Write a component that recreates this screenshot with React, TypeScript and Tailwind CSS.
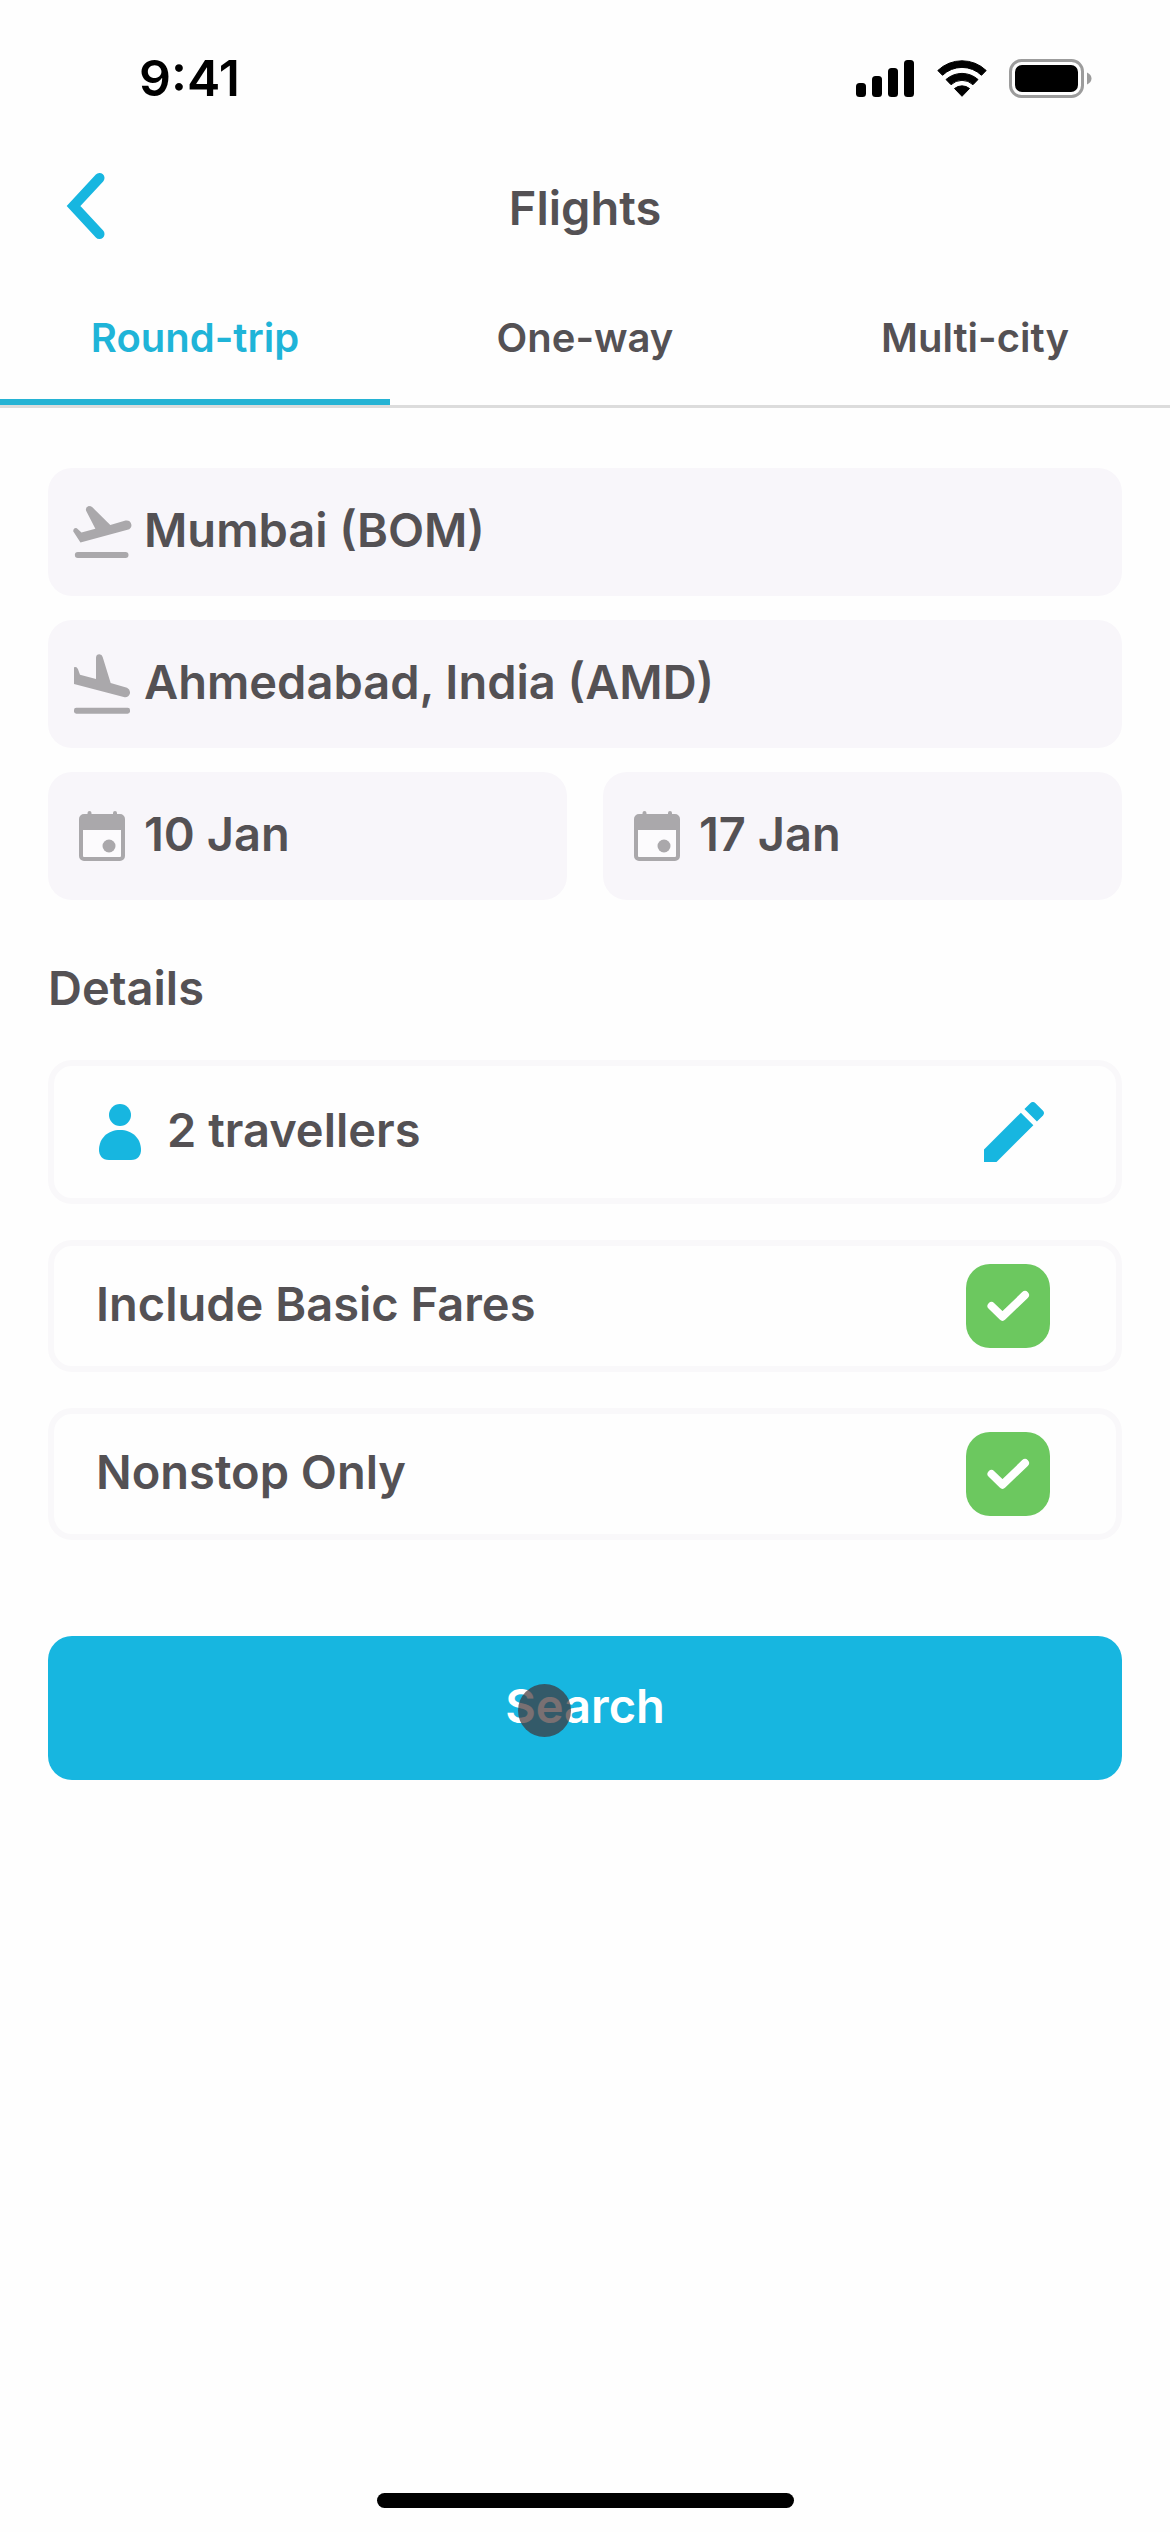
import { useState } from "react";
import type { ReactNode } from "react";

function StatusBar() {
  return (
    <div className="flex h-[156px] items-center justify-between pr-[78px] pl-[139px] text-black">
      <span className="text-[50px] leading-[60px] font-semibold">9:41</span>
      <div className="flex items-center gap-[22px]">
        <svg className="h-[37px] w-[59px]" viewBox="0 0 59 37" fill="currentColor" aria-hidden="true">
          <rect x="0" y="23" width="10" height="14" rx="3.5" />
          <rect x="16" y="16" width="10" height="21" rx="3.5" />
          <rect x="32" y="8" width="10" height="29" rx="3.5" />
          <rect x="48" y="0" width="10" height="37" rx="3.5" />
        </svg>
        <svg
          className="h-[37px] w-[50px]"
          viewBox="0 0 50 37"
          fill="currentColor"
          stroke="currentColor"
          strokeWidth="1"
          strokeLinejoin="round"
          aria-hidden="true"
        >
          <path d="M.8 10.500A35 35 0 0 1 49.200 10.500L44.500 15.300A28 28 0 0 0 5.500 15.300Z" />
          <path d="M9 19.500A24 24 0 0 1 41 19.500L36 24.700A16 16 0 0 0 14 24.700Z" />
          <path d="M17.500 28.500A12 12 0 0 1 32.500 28.500L25 36.300Z" />
        </svg>
        <svg className="h-[39px] w-[83px]" viewBox="0 0 83 39" aria-hidden="true">
          <rect x="1.500" y="1.500" width="72" height="36" rx="11" fill="none" stroke="#9c9c9c" strokeWidth="3" />
          <rect x="6" y="6" width="63" height="27" rx="7" fill="#000" />
          <path d="M78 13.500c6 2.500 6 9.500 0 12z" fill="#9c9c9c" />
        </svg>
      </div>
    </div>
  );
}

function TakeoffIcon() {
  return (
    <svg className="h-[52px] w-[59px]" viewBox="100 47 177 157" fill="#aaa8ab" aria-hidden="true">
      <path d="M100 123Q101 112 111 114L125 127L167 116L139 61Q136 51 147 47Q154 47 158 51L212 104L258 91Q273 89 276 104Q276 115 264 119L122 157Z" />
      <rect x="105" y="186" width="162" height="18" rx="9" />
    </svg>
  );
}

function LandingIcon() {
  return (
    <svg className="h-[60px] w-[56px]" viewBox="102 490 168 180" fill="#aaa8ab" aria-hidden="true">
      <path d="M102 530Q110 526 114 536L120 552L168 565V501Q169 491 178 491Q186 492 188 499L212 577L261 591Q271 596 270 608Q266 621 254 620L102 580Z" />
      <rect x="102" y="651" width="168" height="18" rx="7" />
    </svg>
  );
}

function CalendarIcon() {
  return (
    <svg className="h-[50px] w-[46px]" viewBox="0 0 46 50" aria-hidden="true">
      <rect x="2" y="5" width="42" height="43" rx="3" fill="#fcfbfd" stroke="#aaa8ab" strokeWidth="4" />
      <path d="M2 5h42v14H2zM8.500 4V2a2 2 0 0 1 4 0v2zM34 4V2a2 2 0 0 1 4 0v2z" fill="#aaa8ab" />
      <circle cx="30" cy="35" r="6.500" fill="#aaa8ab" />
    </svg>
  );
}

function Field({ icon, children }: { icon: ReactNode; children: ReactNode }) {
  return (
    <button
      type="button"
      className="flex h-32 w-full items-center gap-3 rounded-3xl bg-[#f8f6fa] pl-6 text-left text-[47px] leading-[56px] font-semibold"
    >
      <span className="flex w-[60px] shrink-0 justify-center">{icon}</span>
      <span className="pb-1">{children}</span>
    </button>
  );
}

function CheckRow({ label }: { label: string }) {
  const [checked, setChecked] = useState(true);
  return (
    <label className="flex h-[132px] items-center justify-between rounded-3xl border-[6px] border-[#f9f8fa] pr-[66px] pl-[42px]">
      <span className="pb-1">{label}</span>
      <span className="grid size-[84px]">
        <input
          type="checkbox"
          checked={checked}
          onChange={(e) => setChecked(e.target.checked)}
          className="peer col-start-1 row-start-1 size-full appearance-none rounded-3xl bg-gray-200 checked:bg-[#6cc85f]"
        />
        <svg
          className="pointer-events-none invisible col-start-1 row-start-1 size-full peer-checked:visible"
          viewBox="0 0 84 84"
          fill="none"
          stroke="#fff"
          strokeWidth="8"
          strokeLinecap="round"
          strokeLinejoin="round"
          aria-hidden="true"
        >
          <path d="M25.500 42L36.500 52.700L59 31" />
        </svg>
      </span>
    </label>
  );
}

const tabs = ["Round-trip", "One-way", "Multi-city"];

export default function App() {
  const [active, setActive] = useState(tabs[0]);
  return (
    <div className="flex min-h-screen flex-col bg-[#fefefe] font-['Inter',sans-serif] text-[#545154]">
      <StatusBar />
      <header className="grid h-[104px] grid-cols-[1fr_auto_1fr] items-center">
        <button type="button" aria-label="Back" className="justify-self-start pb-1 pl-[66px]">
          <svg className="h-[68px] w-[40px]" viewBox="0 0 40 68" fill="none" stroke="#17b6e0" strokeWidth="10" strokeLinecap="round" aria-hidden="true">
            <path d="M33.500 6L7.500 34L33.500 62" />
          </svg>
        </button>
        <h1 className="text-[47px] leading-[56px] font-semibold">Flights</h1>
      </header>
      <div role="tablist" className="grid grid-cols-3 border-b-[3px] border-[#dcdcdc]">
        {tabs.map((tab) => (
          <button
            key={tab}
            type="button"
            role="tab"
            aria-selected={tab === active}
            onClick={() => setActive(tab)}
            className="h-[145px] border-b-[6px] border-transparent pt-4 text-[40px] leading-[50px] font-semibold aria-selected:border-[#25b3d4] aria-selected:text-[#1fb4d8]"
          >
            {tab}
          </button>
        ))}
      </div>
      <main className="px-12 pt-[60px] text-[47px] leading-[56px] font-semibold">
        <div className="flex flex-col gap-6">
          <Field icon={<TakeoffIcon />}>Mumbai (BOM)</Field>
          <Field icon={<LandingIcon />}>Ahmedabad, India (AMD)</Field>
          <div className="grid grid-cols-2 gap-9">
            <Field icon={<CalendarIcon />}>10 Jan</Field>
            <Field icon={<CalendarIcon />}>17 Jan</Field>
          </div>
        </div>
        <h2 className="mt-[60px]">Details</h2>
        <div className="mt-11 flex flex-col gap-9">
          <div className="flex h-36 items-center rounded-3xl border-[6px] border-[#f9f8fa] pr-[72px] pl-[45px]">
            <svg className="h-[56px] w-[42px] shrink-0" viewBox="0 0 42 56" fill="#17b6e0" aria-hidden="true">
              <circle cx="21" cy="11" r="11" />
              <path d="M0 46C0 34 9 26 21 26S42 34 42 46C42 51 39 56 32 56H10C3 56 0 51 0 46Z" />
            </svg>
            <span className="grow pb-1 pl-[26px]">2 travellers</span>
            <button type="button" aria-label="Edit travellers">
              <svg className="block size-[60px]" viewBox="3 3 18 18" fill="#17b6e0" aria-hidden="true">
                <path d="M3 17.250V21h3.750L17.810 9.940l-3.750-3.750L3 17.250zM20.710 7.040c.39-.39.39-1.020 0-1.410l-2.340-2.340c-.39-.39-1.020-.39-1.410 0l-1.830 1.830 3.750 3.750 1.830-1.830z" />
              </svg>
            </button>
          </div>
          <CheckRow label="Include Basic Fares" />
          <CheckRow label="Nonstop Only" />
        </div>
        <button type="button" className="relative mt-24 h-36 w-full rounded-3xl bg-[#17b6e0] pb-1 text-white">
          Search
          <span className="absolute top-12 left-1/2 -ml-[67px] size-[53px] rounded-full bg-[rgb(64,51,54)]/70" />
        </button>
      </main>
      <div className="mx-auto mt-auto mb-6 h-[15px] w-[417px] rounded-full bg-black" />
    </div>
  );
}
